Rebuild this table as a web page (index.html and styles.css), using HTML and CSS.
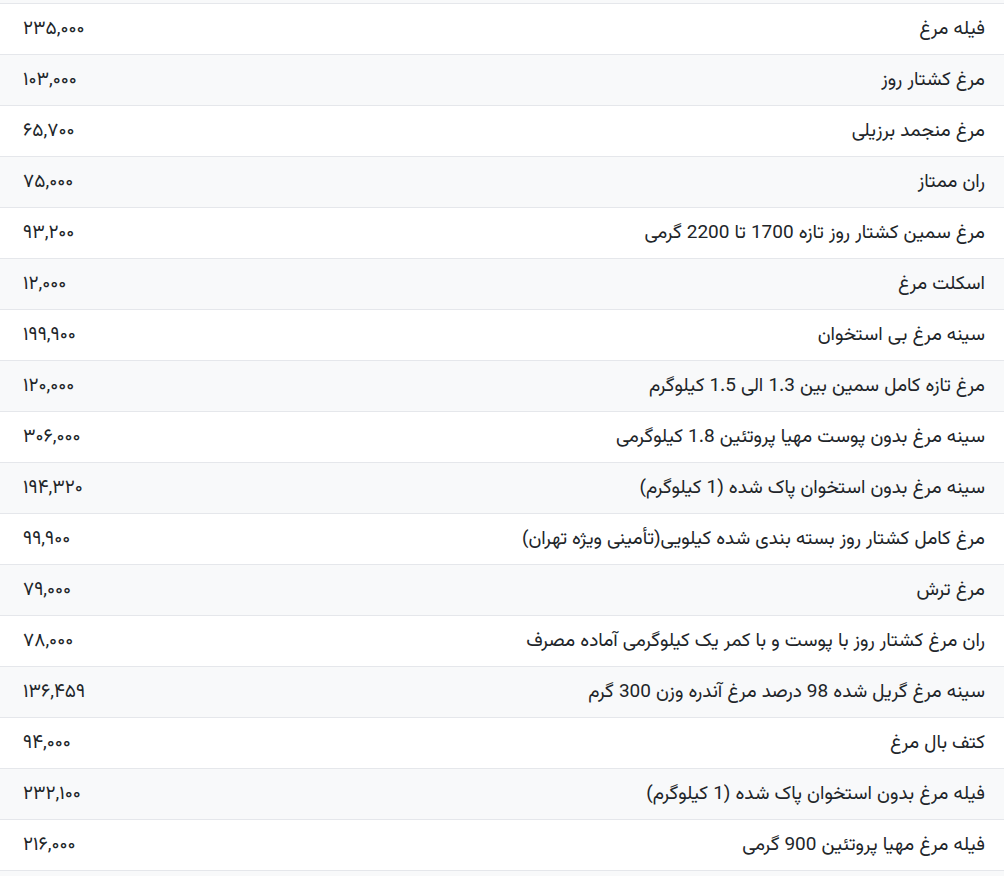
FILE: index.html
```html
<!DOCTYPE html>
<html lang="fa" dir="rtl">
<head>
<meta charset="utf-8">
<title>قیمت مرغ</title>
<link rel="stylesheet" href="styles.css">
</head>
<body>
<div class="top-strip"></div>
<table class="prices">
<tbody>
<tr><td class="name">فیله مرغ</td><td class="price">۲۳۵,۰۰۰</td></tr>
<tr><td class="name">مرغ کشتار روز</td><td class="price">۱۰۳,۰۰۰</td></tr>
<tr><td class="name">مرغ منجمد برزیلی</td><td class="price">۶۵,۷۰۰</td></tr>
<tr><td class="name">ران ممتاز</td><td class="price">۷۵,۰۰۰</td></tr>
<tr><td class="name">مرغ سمین کشتار روز تازه 1700 تا 2200 گرمی</td><td class="price">۹۳,۲۰۰</td></tr>
<tr><td class="name">اسکلت مرغ</td><td class="price">۱۲,۰۰۰</td></tr>
<tr><td class="name">سینه مرغ بی استخوان</td><td class="price">۱۹۹,۹۰۰</td></tr>
<tr><td class="name">مرغ تازه کامل سمین بین 1.3 الی 1.5 کیلوگرم</td><td class="price">۱۲۰,۰۰۰</td></tr>
<tr><td class="name">سینه مرغ بدون پوست مهیا پروتئین 1.8 کیلوگرمی</td><td class="price">۳۰۶,۰۰۰</td></tr>
<tr><td class="name">سینه مرغ بدون استخوان پاک شده (1 کیلوگرم)</td><td class="price">۱۹۴,۳۲۰</td></tr>
<tr><td class="name">مرغ کامل کشتار روز بسته بندی شده کیلویی(تأمینی ویژه تهران)</td><td class="price">۹۹,۹۰۰</td></tr>
<tr><td class="name">مرغ ترش</td><td class="price">۷۹,۰۰۰</td></tr>
<tr><td class="name">ران مرغ کشتار روز با پوست و با کمر یک کیلوگرمی آماده مصرف</td><td class="price">۷۸,۰۰۰</td></tr>
<tr><td class="name">سینه مرغ گریل شده 98 درصد مرغ آندره وزن 300 گرم</td><td class="price">۱۳۶,۴۵۹</td></tr>
<tr><td class="name">کتف بال مرغ</td><td class="price">۹۴,۰۰۰</td></tr>
<tr><td class="name">فیله مرغ بدون استخوان پاک شده (1 کیلوگرم)</td><td class="price">۲۳۲,۱۰۰</td></tr>
<tr><td class="name">فیله مرغ مهیا پروتئین 900 گرمی</td><td class="price">۲۱۶,۰۰۰</td></tr>
<tr class="cut"><td class="name"></td><td class="price"></td></tr>
</tbody>
</table>
</body>
</html>
```

FILE: styles.css
```css
html, body {
  margin: 0;
  padding: 0;
  background: #ffffff;
}

body {
  font-family: Vazirmatn, "DejaVu Sans", sans-serif;
  font-size: 19px;
  line-height: 1.5;
  color: #212529;
  height: 876px;
  overflow: hidden;
}

.top-strip {
  height: 3px;
  background: #f8f9fa;
}

.prices {
  width: 100%;
  border-collapse: collapse;
}

.prices tr {
  height: 51px;
}

.prices tr:nth-child(even) {
  background: #f8f9fa;
}

.prices tr.cut {
  height: 5px;
}

.prices td {
  border-top: 1px solid #e5e7eb;
  padding: 2px 0 0;
  vertical-align: middle;
  white-space: nowrap;
}

.prices tr.cut td {
  padding: 0;
  line-height: 0;
}

.prices .name {
  text-align: right;
  padding-right: 19px;
}

.prices .price {
  text-align: left;
  padding-left: 23px;
  width: 160px;
}
```
